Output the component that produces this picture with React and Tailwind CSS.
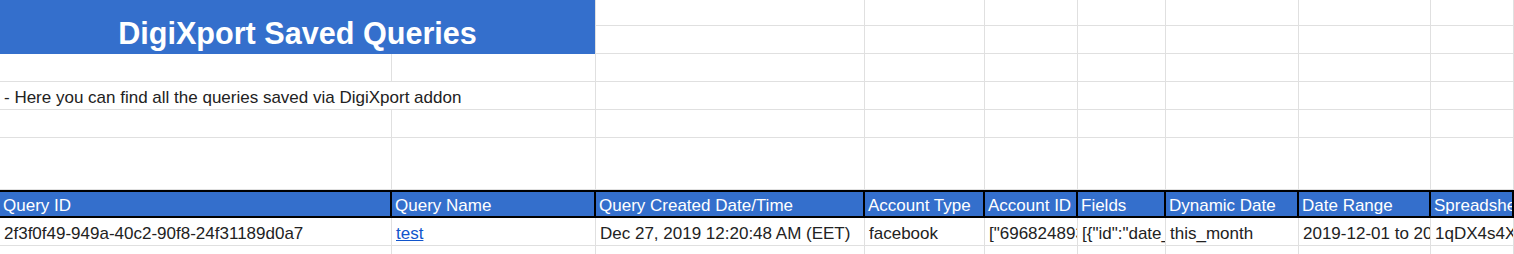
import React from "react";

const cols = [
  { header: "Query ID", value: "2f3f0f49-949a-40c2-90f8-24f31189d0a7" },
  { header: "Query Name", value: "test", link: true },
  { header: "Query Created Date/Time", value: "Dec 27, 2019 12:20:48 AM (EET)" },
  { header: "Account Type", value: "facebook" },
  { header: "Account ID", value: '["696824893185046"]' },
  { header: "Fields", value: '[{"id":"date_start","name":"Date start"}]' },
  { header: "Dynamic Date", value: "this_month" },
  { header: "Date Range", value: "2019-12-01 to 2019-12-31" },
  { header: "Spreadsheet ID", value: "1qDX4s4XkP2vLmR8aTq" },
];

// plain grid cell with the light sheet gridlines
const cell =
  "border-r border-b border-[#e0e0e0] overflow-hidden whitespace-nowrap px-[4px] pb-[1px] flex items-end min-w-0";

const EmptyRow = ({ from = 0 }) =>
  cols.slice(from).map((c, i) => <div key={c.header + i} className={cell}></div>);

const App = () => {
  return (
    <div
      className="w-[1514px] h-[254px] overflow-hidden bg-white text-[#222] text-[17px] leading-[20px]"
      style={{ fontFamily: '"Liberation Sans", Arial, sans-serif' }}
    >
      <div className="grid grid-cols-[392px_204px_269px_120px_93px_88px_133px_132px_1fr] grid-rows-[26px_28px_28px_28px_28px_52px_28px_28px_28px]">
        {/* title, merged over two rows and two columns */}
        <div className="col-span-2 row-span-2 bg-[#346fcc] text-white font-bold text-[30.6px] leading-[30px] flex items-end justify-center pb-[6px] border-r border-[#e0e0e0]">
          DigiXport Saved Queries
        </div>
        <EmptyRow from={2} />
        <EmptyRow from={2} />

        <EmptyRow />

        {/* text spills over the empty cell next to it */}
        <div className={cell + " col-span-2 pb-0"}>
          <span>- Here you can find all the queries saved via DigiXport addon</span>
        </div>
        <EmptyRow from={2} />

        <EmptyRow />
        <EmptyRow />

        {/* header row */}
        {cols.map((c) => (
          <div
            key={"h" + c.header}
            className="bg-[#346fcc] text-white border-t-2 border-b-2 border-r-2 border-black overflow-hidden whitespace-nowrap px-[3px] flex items-end min-w-0"
          >
            {c.header}
          </div>
        ))}

        {/* data row */}
        {cols.map((c) => (
          <div key={"d" + c.header} className={cell}>
            {c.link ? (
              <a href="#" className="text-[#1155cc] underline">
                {c.value}
              </a>
            ) : (
              c.value
            )}
          </div>
        ))}

        <EmptyRow />
      </div>
    </div>
  );
};

export default App;
